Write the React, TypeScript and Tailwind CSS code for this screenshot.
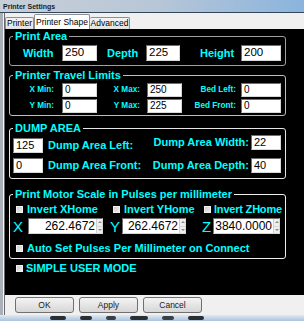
import React from "react";

const label = "shrink-0 whitespace-nowrap text-[11px] font-bold leading-none text-[#00ffff]";
const small = "shrink-0 whitespace-nowrap text-right text-[8.2px] font-bold leading-none text-[#00ffff]";

function Box({ value, className }: { value: string; className: string }) {
  return (
    <div
      className={`flex shrink-0 items-center border border-t-[#6e6e6e] border-l-[#6e6e6e] border-r-[#d8d8d8] border-b-[#d8d8d8] bg-white pl-[2px] leading-none text-black ${className}`}
    >
      {value}
    </div>
  );
}

function Spin({ value, className }: { value: string; className: string }) {
  return (
    <div
      className={`flex h-[16px] shrink-0 border border-t-[#6e6e6e] border-l-[#6e6e6e] border-r-[#d8d8d8] border-b-[#d8d8d8] bg-white ${className}`}
    >
      <div className="flex flex-1 items-center justify-end pr-[1px] text-[12px] leading-none text-black">
        {value}
      </div>
      <div className="flex w-[6px] flex-col border-l border-[#cfcfcf] bg-[#efefef]">
        <div className="flex flex-1 items-center justify-center border-b border-[#d6d6d6]">
          <svg width="4" height="2" viewBox="0 0 4 2">
            <path d="M0 2L2 0L4 2Z" fill="#8c8c8c" />
          </svg>
        </div>
        <div className="flex flex-1 items-center justify-center">
          <svg width="4" height="2" viewBox="0 0 4 2">
            <path d="M0 0L2 2L4 0Z" fill="#8c8c8c" />
          </svg>
        </div>
      </div>
    </div>
  );
}

function Check() {
  return (
    <span className="inline-block h-[7px] w-[7px] shrink-0 border border-[#f0f0f0] bg-gradient-to-br from-[#cfcfcf] to-[#ececec]" />
  );
}

function Legend({ children }: { children: React.ReactNode }) {
  return (
    <legend className="ml-[3px] px-[2px] text-[11px] font-bold leading-[14px] text-[#00ffff]">
      {children}
    </legend>
  );
}

export default function App() {
  return (
    <div className="h-[321px] w-[304px] overflow-hidden bg-[#f0f0f0] font-['Liberation_Sans',Arial,sans-serif]">
      {/* title bar */}
      <div className="flex h-[13px] items-center border-b border-[#33465a] bg-gradient-to-r from-[#c7cfd7] via-[#b8c7d7] to-[#8ab4dd] pl-[3px]">
        <span className="text-[7px] font-bold leading-none text-[#1c1c1c]">Printer Settings</span>
      </div>

      <div className="flex h-[302px]">
        {/* left frame */}
        <div className="flex w-[5px] shrink-0">
          <div className="w-[3px] bg-[#a9b0b7]" />
          <div className="w-[1px] bg-[#f4f4f4]" />
          <div className="w-[1px] bg-[#6a6a6a]" />
        </div>

        <div className="flex flex-1 flex-col">
          {/* tabs */}
          <div className="flex h-[16px] items-end bg-[#f0f0f0]">
            <div className="flex h-[12px] w-[29px] items-center justify-center rounded-t-[2px] border border-b-0 border-[#8c8e94] bg-gradient-to-b from-[#f4f4f4] to-[#e2e2e2] text-[8.5px] leading-none text-black">
              Printer
            </div>
            <div className="flex h-[15px] w-[56px] items-center justify-center rounded-t-[2px] border border-b-0 border-[#8c8e94] bg-white text-[8.5px] leading-none text-black">
              Printer Shape
            </div>
            <div className="flex h-[12px] w-[40px] items-center justify-center rounded-t-[2px] border border-b-0 border-l-0 border-[#8c8e94] bg-gradient-to-b from-[#f4f4f4] to-[#e2e2e2] text-[8.5px] leading-none text-black">
              Advanced
            </div>
          </div>

          {/* black panel */}
          <div className="h-[266px] bg-black">
            <fieldset className="ml-[4px] h-[37px] w-[277px] rounded-[3px] border border-[#a0a0a0]">
              <Legend>Print Area</Legend>
              <div className="mt-[2px] flex h-[16px] items-center">
                <span className={`${label} w-[52px] pl-[13px]`}>Width</span>
                <Box value="250" className="h-[16px] w-[35px] text-[11.5px]" />
                <span className={`${label} w-[49px] pl-[10px]`}>Depth</span>
                <Box value="225" className="h-[16px] w-[34px] text-[11.5px]" />
                <span className={`${label} w-[61px] pl-[20px]`}>Height</span>
                <Box value="200" className="h-[16px] w-[40px] text-[11.5px]" />
              </div>
            </fieldset>

            <fieldset className="ml-[4px] mt-[2px] h-[48px] w-[277px] rounded-[3px] border border-[#bdbdbd]">
              <Legend>Printer Travel Limits</Legend>
              <div className="mt-[1px] flex flex-col gap-[2px]">
                <div className="flex h-[14px] items-center">
                  <span className={`${small} w-[52px] pr-[8px]`}>X Min:</span>
                  <Box value="0" className="h-[14px] w-[35px] text-[10px]" />
                  <span className={`${small} w-[50px] pr-[7px]`}>X Max:</span>
                  <Box value="250" className="h-[14px] w-[35px] text-[10px]" />
                  <span className={`${small} w-[59px] pr-[5px]`}>Bed Left:</span>
                  <Box value="0" className="h-[14px] w-[40px] text-[10px]" />
                </div>
                <div className="flex h-[14px] items-center">
                  <span className={`${small} w-[52px] pr-[8px]`}>Y Min:</span>
                  <Box value="0" className="h-[14px] w-[35px] text-[10px]" />
                  <span className={`${small} w-[50px] pr-[7px]`}>Y Max:</span>
                  <Box value="225" className="h-[14px] w-[35px] text-[10px]" />
                  <span className={`${small} w-[59px] pr-[5px]`}>Bed Front:</span>
                  <Box value="0" className="h-[14px] w-[40px] text-[10px]" />
                </div>
              </div>
            </fieldset>

            <fieldset className="ml-[4px] mt-[5px] h-[58px] w-[277px] rounded-[3px] border border-[#e6e6e6]">
              <Legend>DUMP AREA</Legend>
              <div className="flex justify-between">
                <div className="flex flex-col gap-[5px] pl-[3px] pt-[3px]">
                  <div className="flex h-[15px] items-center">
                    <Box value="125" className="h-[15px] w-[30px] text-[11px]" />
                    <span className={`${label} ml-[5px]`}>Dump Area Left:</span>
                  </div>
                  <div className="flex h-[15px] items-center">
                    <Box value="0" className="h-[15px] w-[30px] text-[11px]" />
                    <span className={`${label} ml-[5px]`}>Dump Area Front:</span>
                  </div>
                </div>
                <div className="flex flex-col gap-[8px] pr-[4px]">
                  <div className="flex h-[15px] items-center justify-end">
                    <span className={`${label} mr-[2px]`}>Dump Area Width:</span>
                    <Box value="22" className="h-[15px] w-[30px] text-[11px]" />
                  </div>
                  <div className="flex h-[15px] items-center justify-end">
                    <span className={`${label} mr-[2px]`}>Dump Area Depth:</span>
                    <Box value="40" className="h-[15px] w-[30px] text-[11px]" />
                  </div>
                </div>
              </div>
            </fieldset>

            <fieldset className="ml-[4px] mt-[8px] h-[72px] w-[277px] rounded-[3px] border border-[#eeeeee]">
              <Legend>Print Motor Scale in Pulses per millimeter</Legend>
              <div className="mt-[1px] flex h-[14px] items-center pl-[6px]">
                <div className="flex w-[97px] shrink-0 items-center gap-[4px]">
                  <Check />
                  <span className={label}>Invert XHome</span>
                </div>
                <div className="flex w-[91px] shrink-0 items-center gap-[4px]">
                  <Check />
                  <span className={label}>Invert YHome</span>
                </div>
                <div className="flex items-center gap-[3px]">
                  <Check />
                  <span className={`${label} tracking-[-0.2px]`}>Invert ZHome</span>
                </div>
              </div>
              <div className="mt-[2px] flex h-[16px] items-center">
                <span className="w-[18px] shrink-0 pl-[3px] text-[15px] leading-none text-[#00ffff]">X</span>
                <Spin value="262.4672" className="w-[75px]" />
                <span className="w-[19px] shrink-0 pl-[7px] text-[15px] leading-none text-[#00ffff]">Y</span>
                <Spin value="262.4672" className="w-[64px]" />
                <span className="w-[27px] shrink-0 pl-[16px] text-[15px] leading-none text-[#00ffff]">Z</span>
                <Spin value="3840.0000" className="w-[67px]" />
              </div>
              <div className="mt-[7px] flex h-[14px] items-center gap-[4px] pl-[6px]">
                <Check />
                <span className={label}>Auto Set Pulses Per Millimeter on Connect</span>
              </div>
            </fieldset>

            <div className="ml-[11px] mt-[2px] flex h-[14px] items-center gap-[3px]">
              <Check />
              <span className={label}>SIMPLE USER MODE</span>
            </div>
          </div>

          {/* buttons */}
          <div className="flex h-[20px] gap-[5px] bg-[#f0f0f0] pl-[10px] pt-[2px]">
            {["OK", "Apply", "Cancel"].map((b) => (
              <div
                key={b}
                className="flex h-[16px] w-[59px] items-center justify-center rounded-[3px] border border-[#707070] bg-gradient-to-b from-[#f4f4f4] to-[#d6d6d6] text-[8.5px] leading-none text-[#1a1a1a]"
              >
                {b}
              </div>
            ))}
          </div>
        </div>
      </div>

      {/* taskbar peeking below */}
      <div className="flex h-[6px] items-center gap-[14px] bg-gradient-to-b from-[#dfe9f3] to-[#a9c3dc] pl-[50px]">
        <span className="h-[4px] w-[16px] rounded-full bg-[#2a2f36]" />
        <span className="h-[4px] w-[12px] rounded-full bg-[#2a2f36]" />
        <span className="h-[4px] w-[10px] rounded-full bg-[#3a4048]" />
        <span className="h-[4px] w-[18px] rounded-full bg-[#2a2f36]" />
        <span className="h-[4px] w-[12px] rounded-full bg-[#3a4048]" />
        <span className="h-[4px] w-[16px] rounded-full bg-[#2a2f36]" />
      </div>
    </div>
  );
}
